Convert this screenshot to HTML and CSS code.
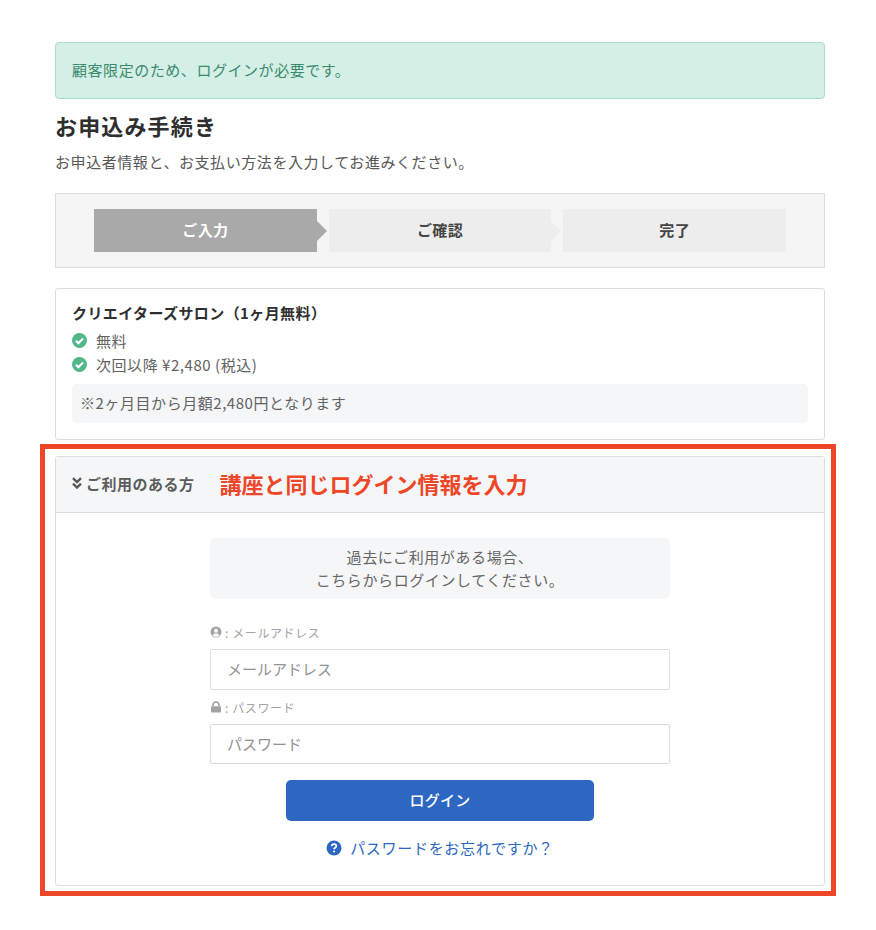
FILE: index.html
```html
<!DOCTYPE html>
<html lang="ja">
<head>
<meta charset="utf-8">
<title>お申込み手続き</title>
<link rel="stylesheet" href="styles.css">
</head>
<body>
<main class="page">
  <div class="alert">顧客限定のため、ログインが必要です。</div>
  <h1 class="title">お申込み手続き</h1>
  <p class="lead">お申込者情報と、お支払い方法を入力してお進みください。</p>
  <ol class="steps">
    <li class="step step-active">ご入力</li>
    <li class="step">ご確認</li>
    <li class="step step-last">完了</li>
  </ol>
  <section class="plan">
    <h2 class="plan-name">クリエイターズサロン（1ヶ月無料）</h2>
    <ul class="plan-list">
      <li class="plan-item">
        <svg class="check" viewBox="0 0 16 16"><circle cx="8" cy="8" r="8" fill="#52b788"/><path d="M4.200 8.300l2.600 2.600 5-5.100" fill="none" stroke="#fff" stroke-width="2.200"/></svg>
        <span>無料</span>
      </li>
      <li class="plan-item">
        <svg class="check" viewBox="0 0 16 16"><circle cx="8" cy="8" r="8" fill="#52b788"/><path d="M4.200 8.300l2.600 2.600 5-5.100" fill="none" stroke="#fff" stroke-width="2.200"/></svg>
        <span>次回以降 ¥2,480 (税込)</span>
      </li>
    </ul>
    <p class="plan-note">※2ヶ月目から月額2,480円となります</p>
  </section>
  <section class="login">
    <header class="login-head">
      <svg class="chevrons" viewBox="0 0 10 12"><path d="M1 1.200l4 3.800 4-3.800M1 6.700l4 3.800 4-3.800" fill="none" stroke="#555" stroke-width="2.400"/></svg>
      <span class="login-title">ご利用のある方</span>
      <span class="login-callout">講座と同じログイン情報を入力</span>
    </header>
    <div class="login-body">
      <form class="login-form">
        <p class="login-msg">過去にご利用がある場合、<br>こちらからログインしてください。</p>
        <label class="field-label">
          <svg class="field-icon" viewBox="0 0 12 12"><circle cx="6" cy="6" r="5.500" fill="#a3a3a3"/><circle cx="6" cy="4.700" r="2" fill="#fff"/><path d="M2.600 9.400c.7-1.400 2-1.900 3.400-1.900s2.700.5 3.400 1.900c-.9.900-2.100 1.400-3.400 1.400s-2.500-.5-3.400-1.400z" fill="#fff"/></svg>
          <span>: メールアドレス</span>
        </label>
        <input class="field-input" type="text" placeholder="メールアドレス">
        <label class="field-label field-label-pass">
          <svg class="field-icon" viewBox="0 0 12 12"><path d="M3 5.500V4a3 3 0 0 1 6 0v1.500" fill="none" stroke="#a3a3a3" stroke-width="1.600"/><rect x="1" y="5.200" width="10" height="6.300" rx="1" fill="#a3a3a3"/></svg>
          <span>: パスワード</span>
        </label>
        <input class="field-input field-input-pass" type="password" placeholder="パスワード">
        <button class="submit" type="button">ログイン</button>
        <a class="forgot" href="#">
          <svg class="forgot-icon" viewBox="0 0 16 16"><circle cx="8" cy="8" r="7.500" fill="#2d67c2"/><path d="M5.700 6.200c.1-1.300 1-2 2.300-2s2.300.8 2.300 1.900c0 1.700-2.200 1.600-2.200 3.100" fill="none" stroke="#fff" stroke-width="1.700"/><circle cx="8.100" cy="11.500" r="1.100" fill="#fff"/></svg>
          <span>パスワードをお忘れですか？</span>
        </a>
      </form>
    </div>
  </section>
</main>
<div class="annotation"></div>
</body>
</html>
```

FILE: styles.css
```css
* { box-sizing: border-box; }
html, body { margin: 0; padding: 0; background: #fff; }
body {
  font-family: "Noto Sans CJK JP", "Noto Sans", sans-serif;
  color: #333;
  height: 930px;
  position: relative;
  overflow: hidden;
}
.page { width: 770px; margin-left: 55px; padding-top: 42px; }
.alert {
  height: 57px;
  padding: 0 0 2px 16px;
  display: flex;
  align-items: center;
  background: #d4efe5;
  border: 1px solid #a6e0cb;
  border-radius: 4px;
  color: #3b8a6c;
  font-size: 15px;
  letter-spacing: .55px;
}
.title {
  margin: 10px 0 0;
  font-size: 22px;
  line-height: 33px;
  font-weight: 700;
  letter-spacing: 1.150px;
  color: #2e2e2e;
}
.lead {
  margin: 9px 0 0;
  font-size: 15px;
  line-height: 21px;
  letter-spacing: .57px;
  color: #585858;
}
.steps {
  list-style: none;
  margin: 21px 0 0;
  height: 75px;
  padding: 15px 38px;
  display: flex;
  gap: 12px;
  background: #f5f5f5;
  border: 1px solid #dcdcdc;
}
.step {
  position: relative;
  width: 222.700px;
  height: 43px;
  padding-bottom: 2px;
  display: flex;
  align-items: center;
  justify-content: center;
  background: #ededed;
  color: #444;
  font-size: 15px;
  font-weight: 700;
  letter-spacing: .4px;
}
.step::after {
  content: "";
  position: absolute;
  left: 100%;
  top: 12px;
  border-left: 10px solid #ededed;
  border-top: 10px solid transparent;
  border-bottom: 10px solid transparent;
}
.step-active { background: #a9a9a9; color: #fff; }
.step-active::after { border-left-color: #a9a9a9; }
.step-last::after { display: none; }
.plan {
  margin-top: 20px;
  height: 152px;
  padding: 13px 16px 0;
  border: 1px solid #dedede;
  border-radius: 3px;
}
.plan-name {
  margin: 0;
  font-size: 15px;
  line-height: 21px;
  font-weight: 700;
  letter-spacing: .4px;
  color: #2e2e2e;
}
.plan-list { list-style: none; margin: 6px 0 0; padding: 0; }
.plan-item {
  display: flex;
  align-items: center;
  gap: 9px;
  height: 23.500px;
  font-size: 15px;
  letter-spacing: .55px;
  color: #626262;
}
.check { width: 15px; height: 15px; flex: none; }
.plan-note {
  margin: 8px 0 0;
  height: 39px;
  padding-left: 8px;
  padding-bottom: 2px;
  display: flex;
  align-items: center;
  background: #f5f6f8;
  border-radius: 5px;
  font-size: 15px;
  letter-spacing: .55px;
  color: #626262;
}
.login {
  margin-top: 16px;
  height: 430px;
  border: 1px solid #dedede;
  border-radius: 3px;
}
.login-head {
  height: 56px;
  padding: 0 0 3px 16px;
  display: flex;
  align-items: center;
  background: #f5f6f8;
  border-bottom: 1px solid #dedede;
}
.chevrons { width: 10px; height: 12px; margin-right: 4px; flex: none; }
.login-title {
  font-size: 15px;
  font-weight: 700;
  letter-spacing: .5px;
  color: #5c5c5c;
}
.login-callout {
  margin-left: 25px;
  font-size: 22px;
  font-weight: 700;
  color: #ee4628;
}
.login-body { padding: 25px 0 0 154px; }
.login-form { width: 460px; display: flex; flex-direction: column; }
.login-msg {
  margin: 0;
  height: 61px;
  padding-top: 7px;
  background: #f5f6f8;
  border-radius: 5px;
  text-align: center;
  font-size: 15px;
  line-height: 23px;
  letter-spacing: .6px;
  color: #666;
}
.field-label {
  margin-top: 24px;
  height: 18px;
  display: flex;
  align-items: center;
  gap: 3px;
  font-size: 12px;
  letter-spacing: .6px;
  color: #a3a3a3;
}
.field-label-pass { margin-top: 8px; }
.field-icon { width: 12px; height: 12px; flex: none; }
.field-input {
  margin-top: 8px;
  width: 100%;
  height: 41px;
  padding: 0 16px 2px;
  font-family: inherit;
  font-size: 15px;
  border: 1px solid #dcdcdc;
  border-radius: 2px;
  background: #fff;
  outline: none;
}
.field-input-pass { height: 40px; }
.field-input::placeholder { color: #929292; opacity: 1; }
.submit {
  align-self: center;
  margin-top: 16px;
  width: 308px;
  height: 41px;
  padding-bottom: 4px;
  background: #2d67c2;
  border: 0;
  border-radius: 5px;
  color: #fff;
  font-family: inherit;
  font-size: 15px;
  font-weight: 500;
  letter-spacing: .3px;
}
.forgot {
  align-self: center;
  margin-top: 16px;
  display: flex;
  align-items: center;
  gap: 8px;
  font-size: 15px;
  line-height: 21px;
  letter-spacing: .7px;
  color: #2d67c2;
  text-decoration: none;
}
.forgot-icon { width: 16px; height: 16px; flex: none; }
.annotation {
  position: absolute;
  left: 40px;
  top: 444px;
  width: 796px;
  height: 452px;
  border: 5px solid #ee4628;
  pointer-events: none;
}
```
